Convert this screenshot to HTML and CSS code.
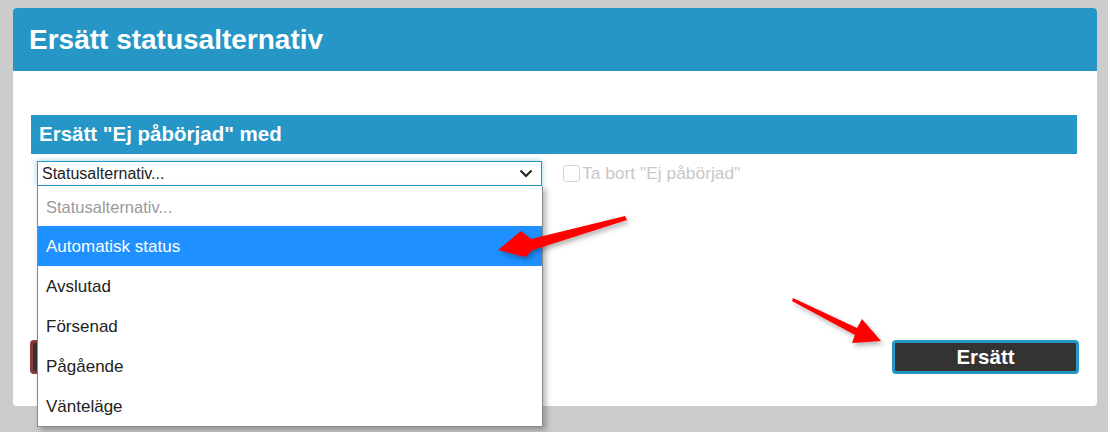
FILE: index.html
```html
<!DOCTYPE html>
<html lang="sv">
<head>
    <meta charset="UTF-8">
    <title>Ersätt statusalternativ</title>
    <link rel="stylesheet" href="styles.css">
</head>
<body>

    <div class="dialog">
        <div class="dialog-header">Ersätt statusalternativ</div>

        <div class="dialog-body">
            <div class="section-title">Ersätt "Ej påbörjad" med</div>

            <div class="row">
                <div class="select-wrap">
                    <div class="select">
                        <span>Statusalternativ...</span>
                        <svg class="chevron" width="14" height="9" viewBox="0 0 14 9">
                            <path d="M1.5 1.5 L7 7 L12.5 1.5" fill="none" stroke="#222" stroke-width="2"/>
                        </svg>
                    </div>
                    <!-- open dropdown -->
                    <ul class="options">
                        <li class="placeholder">Statusalternativ...</li>
                        <li class="active">Automatisk status</li>
                        <li>Avslutad</li>
                        <li>Försenad</li>
                        <li>Pågående</li>
                        <li>Vänteläge</li>
                    </ul>
                </div>
                <label class="check">
                    <span class="box"></span>Ta bort "Ej påbörjad"
                </label>
            </div>

            <div class="footer">
                <!-- cancel button, covered by the open dropdown -->
                <button class="btn btn-cancel" aria-label="Avbryt"></button>
                <button class="btn btn-ok">Ersätt</button>
            </div>
        </div>
    </div>

    <!-- annotation arrows -->
    <svg class="arrows" width="1108" height="432" viewBox="0 0 1108 432">
        <defs>
            <filter id="sh" x="-20%" y="-50%" width="140%" height="200%">
                <feDropShadow dx="2" dy="3" stdDeviation="2.5" flood-color="#000" flood-opacity="0.3"/>
            </filter>
        </defs>
        <polygon filter="url(#sh)" fill="#ff0000" points="625,216 531,239 521,231 498,250 525,257 533,250 627,220"/>
        <polygon filter="url(#sh)" fill="#ff0000" points="793,298 857,328 862,319 881,341 852,343 855,335 792,301"/>
    </svg>

</body>
</html>
```

FILE: styles.css
```css
body {
    margin: 0;
    padding: 8px 11px 0 13px;
    background: #cccccc;
    font-family: "Liberation Sans", Arial, sans-serif;
    height: 432px;
    box-sizing: border-box;
    overflow: hidden;
    position: relative;
}
.dialog {
    background: #ffffff;
    border-radius: 4px;
    height: 398px;
}
.dialog-header {
    background: #2596c6;
    color: #ffffff;
    font-size: 28px;
    font-weight: bold;
    height: 63px;
    line-height: 63px;
    padding-left: 16px;
    border-radius: 4px 4px 0 0;
}
.dialog-body {
    padding: 44px 20px 0 18px;
}
.section-title {
    background: #2596c6;
    color: #ffffff;
    font-size: 20.5px;
    font-weight: bold;
    height: 39px;
    line-height: 38px;
    padding-left: 8px;
}
.row {
    display: flex;
    align-items: flex-start;
    gap: 21px;
    margin-top: 7px;
    padding-left: 6px;
}
.select-wrap {
    position: relative;
    width: 505px;
}
.select {
    height: 25px;
    box-sizing: border-box;
    border: 1px solid #2596c6;
    box-shadow: 0 0 6px rgba(37, 150, 198, 0.45);
    display: flex;
    align-items: center;
    justify-content: space-between;
    padding: 0 8px 0 4px;
    font-size: 16px;
    color: #222222;
}
.chevron {
    display: block;
}
.options {
    position: absolute;
    top: 25px;
    left: 0;
    width: 506px;
    margin: 0;
    padding: 0;
    list-style: none;
    background: #ffffff;
    border: 1px solid #8a8a8a;
    border-top: none;
    box-sizing: border-box;
    box-shadow: 3px 3px 6px rgba(0, 0, 0, 0.3);
    z-index: 5;
}
.options li {
    height: 40px;
    line-height: 42px;
    padding-left: 8px;
    font-size: 17px;
    color: #222222;
}
.options li.placeholder {
    color: #9a9a9a;
    font-size: 16.5px;
}
.options li.active {
    background: #1e90ff;
    color: #ffffff;
}
.check {
    display: flex;
    align-items: center;
    gap: 2px;
    font-size: 17.4px;
    color: #c8c8c8;
    height: 25px;
}
.box {
    width: 15px;
    height: 15px;
    border: 1px solid #d4d4d4;
    border-radius: 3px;
    display: inline-block;
}
.footer {
    display: flex;
    justify-content: space-between;
    margin: 154px -2px 0 -1px;
}
.btn {
    height: 34px;
    width: 187px;
    border-radius: 4px;
    background: #333333;
    color: #ffffff;
    font-family: "Liberation Sans", Arial, sans-serif;
    font-size: 20.5px;
    font-weight: bold;
    border: 3px solid #2596c6;
}
.btn-cancel {
    border-color: #8b3a3a;
}
.arrows {
    position: absolute;
    top: 0;
    left: 0;
    pointer-events: none;
    z-index: 10;
}
```
